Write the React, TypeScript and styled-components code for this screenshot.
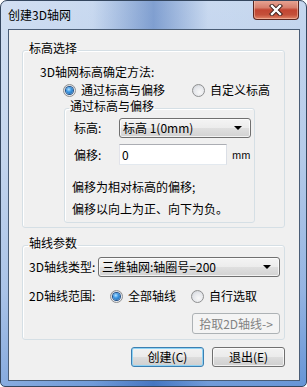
import React from "react";
import styled, { createGlobalStyle } from "styled-components";

const GlobalStyle = createGlobalStyle`
  body {
    margin: 0;
    font-family: "Noto Sans CJK SC", "Noto Sans", sans-serif;
    font-size: 12px;
    color: #000;
  }
  * { box-sizing: border-box; }
`;

const Window = styled.div`
  width: 307px;
  height: 387px;
  border: 1px solid #34465e;
  border-radius: 7px 7px 5px 5px;
  background:
    linear-gradient(90deg, rgba(255,255,255,0.25) 0%, rgba(255,255,255,0.1) 30%, rgba(30,80,165,0.4) 50%, rgba(255,255,255,0.1) 68%, rgba(255,255,255,0.05) 100%),
    linear-gradient(180deg, #c3d5ee 0%, #b1c8e8 40%, #8fb0e0 75%, #5f8fd4 100%);
  display: flex;
  flex-direction: column;
  overflow: hidden;
`;

const TitleBar = styled.div`
  height: 28px;
  display: flex;
  align-items: flex-start;
  justify-content: space-between;
`;

const Title = styled.div`
  padding: 7px 0 0 7px;
  line-height: 14px;
  font-size: 12px;
`;

const CloseButton = styled.div`
  width: 46px;
  height: 20px;
  margin: -1px 7px 0 0;
  border: 1px solid #5a2620;
  border-top: none;
  border-radius: 0 0 4px 4px;
  background: linear-gradient(180deg, #e9a897 0%, #d77f6d 40%, #c24532 52%, #c4503a 78%, #e2866a 100%);
  box-shadow: inset 0 0 0 1px rgba(255, 220, 200, 0.45);
  display: flex;
  align-items: center;
  justify-content: center;
`;

const Client = styled.div`
  flex: 1;
  margin: 0 6px 5px 7px;
  border: 1px solid #4a5d76;
  background: #f0f0f0;
  display: flex;
  flex-direction: column;
`;

const Group = styled.fieldset<{ $mt: number; $ml: number; $mr: number; $pt: number; $pb: number }>`
  margin: ${(p) => p.$mt}px ${(p) => p.$mr}px 0 ${(p) => p.$ml}px;
  padding: ${(p) => p.$pt}px 0 ${(p) => p.$pb}px 0;
  border: 1px solid #d5dfe5;
  border-radius: 3px;
  box-shadow: inset 1px 1px 0 #fff;
  display: flex;
  flex-direction: column;
  min-width: 0;
`;

const Legend = styled.legend<{ $ml: number; $pb: number }>`
  margin-left: ${(p) => p.$ml}px;
  padding: 0 1px ${(p) => p.$pb}px 1px;
  line-height: 14px;
  font-size: 12px;
`;

const Text = styled.div<{ $ml: number; $mt?: number }>`
  margin: ${(p) => p.$mt ?? 0}px 0 0 ${(p) => p.$ml}px;
  line-height: 14px;
  white-space: nowrap;
`;

const Row = styled.div<{ $mt?: number; $pl: number; $h?: number }>`
  display: flex;
  align-items: center;
  margin-top: ${(p) => p.$mt ?? 0}px;
  padding-left: ${(p) => p.$pl}px;
  height: ${(p) => p.$h ?? 14}px;
  white-space: nowrap;
`;

const Label = styled.span<{ $w: number }>`
  width: ${(p) => p.$w}px;
  flex: none;
  line-height: 14px;
`;

const RadioOption = styled.label<{ $w?: number }>`
  display: flex;
  align-items: center;
  gap: 5px;
  width: ${(p) => (p.$w ? `${p.$w}px` : "auto")};
  flex: none;
  line-height: 14px;
`;

const RadioDot = styled.span<{ $on: boolean }>`
  width: 13px;
  height: 13px;
  border-radius: 50%;
  border: 1px solid #8f9091;
  background: radial-gradient(circle at 60% 65%, #f8f8f8 0%, #e4e6ea 55%, #c6cacf 100%);
  display: flex;
  align-items: center;
  justify-content: center;
  flex: none;
  &::after {
    content: "";
    display: ${(p) => (p.$on ? "block" : "none")};
    width: 7px;
    height: 7px;
    border-radius: 50%;
    background: radial-gradient(circle at 40% 35%, #b6e3ff 0%, #3d98e4 40%, #1a5d9e 100%);
    box-shadow: 0 0 0 1px #20518a;
  }
`;

const Select = styled.div<{ $w: number }>`
  width: ${(p) => p.$w}px;
  height: 20px;
  border: 1px solid #707070;
  border-radius: 3px;
  background: linear-gradient(180deg, #f4f4f4 0%, #ececec 50%, #dfdfdf 51%, #d2d2d2 100%);
  box-shadow: inset 0 0 0 1px rgba(255, 255, 255, 0.7);
  display: flex;
  align-items: center;
  justify-content: space-between;
  padding: 0 8px 0 3px;
  line-height: 14px;
  &::after {
    content: "";
    border-left: 4px solid transparent;
    border-right: 4px solid transparent;
    border-top: 4px solid #000;
  }
`;

const Input = styled.div`
  width: 108px;
  height: 21px;
  border: 1px solid #abadb3;
  border-left-color: #e2e3ea;
  border-right-color: #dbdfe6;
  border-bottom-color: #e3e9ef;
  background: #fff;
  padding-left: 2px;
  display: flex;
  align-items: center;
  line-height: 14px;
`;

const Unit = styled.span`
  margin-left: 5px;
  font-size: 10px;
`;

const Button = styled.div<{ $w: number; $h: number; $focus?: boolean; $disabled?: boolean }>`
  width: ${(p) => p.$w}px;
  height: ${(p) => p.$h}px;
  border: 1px solid ${(p) => (p.$disabled ? "#adb2b5" : p.$focus ? "#3c7fb1" : "#707070")};
  border-radius: 3px;
  background: ${(p) =>
    p.$disabled
      ? "#f4f4f4"
      : "linear-gradient(180deg, #f2f2f2 0%, #ebebeb 50%, #dddddd 51%, #cfcfcf 100%)"};
  box-shadow: ${(p) =>
    p.$focus ? "inset 0 0 0 1px #8fd3f5" : p.$disabled ? "none" : "inset 0 0 0 1px rgba(255,255,255,0.7)"};
  color: ${(p) => (p.$disabled ? "#838383" : "#000")};
  display: flex;
  align-items: center;
  justify-content: center;
  line-height: 14px;
  flex: none;
`;

const ButtonRow = styled.div<{ $mt: number; $mr: number }>`
  display: flex;
  justify-content: flex-end;
  gap: 8px;
  margin: ${(p) => p.$mt}px ${(p) => p.$mr}px 0 0;
`;

export default function App() {
  return (
    <>
      <GlobalStyle />
      <Window>
        <TitleBar>
          <Title>创建3D轴网</Title>
          <CloseButton>
            <svg width="14" height="12" viewBox="0 0 14 12">
              <path d="M3 2 L11 10 M11 2 L3 10" stroke="#3a1c18" strokeWidth="4.2" strokeLinecap="square" />
              <path d="M3 2 L11 10 M11 2 L3 10" stroke="#fff" strokeWidth="2.4" strokeLinecap="square" />
            </svg>
          </CloseButton>
        </TitleBar>
        <Client>
          <Group $mt={11} $ml={13} $mr={14} $pt={6} $pb={4}>
            <Legend $ml={5} $pb={4}>标高选择</Legend>
            <Text $ml={17}>3D轴网标高确定方法:</Text>
            <Row $mt={4} $pl={40}>
              <RadioOption $w={129}>
                <RadioDot $on />
                通过标高与偏移
              </RadioOption>
              <RadioOption>
                <RadioDot $on={false} />
                自定义标高
              </RadioOption>
            </Row>
            <Group $mt={2} $ml={41} $mr={29} $pt={0} $pb={6}>
              <Legend $ml={4} $pb={5}>通过标高与偏移</Legend>
              <Row $pl={9} $h={20}>
                <Label $w={45}>标高:</Label>
                <Select $w={132}>标高 1(0mm)</Select>
              </Row>
              <Row $mt={6} $pl={9} $h={21}>
                <Label $w={45}>偏移:</Label>
                <Input>0</Input>
                <Unit>mm</Unit>
              </Row>
              <Text $ml={7} $mt={15}>偏移为相对标高的偏移;</Text>
              <Text $ml={7} $mt={8}>偏移以向上为正、向下为负。</Text>
            </Group>
          </Group>

          <Group $mt={8} $ml={13} $mr={14} $pt={3} $pb={5}>
            <Legend $ml={5} $pb={4}>轴线参数</Legend>
            <Row $pl={6} $h={20}>
              <Label $w={69}>3D轴线类型:</Label>
              <Select $w={182}>三维轴网:轴圈号=200</Select>
            </Row>
            <Row $mt={12} $pl={6}>
              <Label $w={81}>2D轴线范围:</Label>
              <RadioOption $w={81}>
                <RadioDot $on />
                全部轴线
              </RadioOption>
              <RadioOption>
                <RadioDot $on={false} />
                自行选取
              </RadioOption>
            </Row>
            <ButtonRow $mt={10} $mr={4}>
              <Button $w={88} $h={21} $disabled>拾取2D轴线-&gt;</Button>
            </ButtonRow>
          </Group>

          <ButtonRow $mt={7} $mr={14}>
            <Button $w={73} $h={20} $focus>创建(C)</Button>
            <Button $w={73} $h={20}>退出(E)</Button>
          </ButtonRow>
        </Client>
      </Window>
    </>
  );
}
